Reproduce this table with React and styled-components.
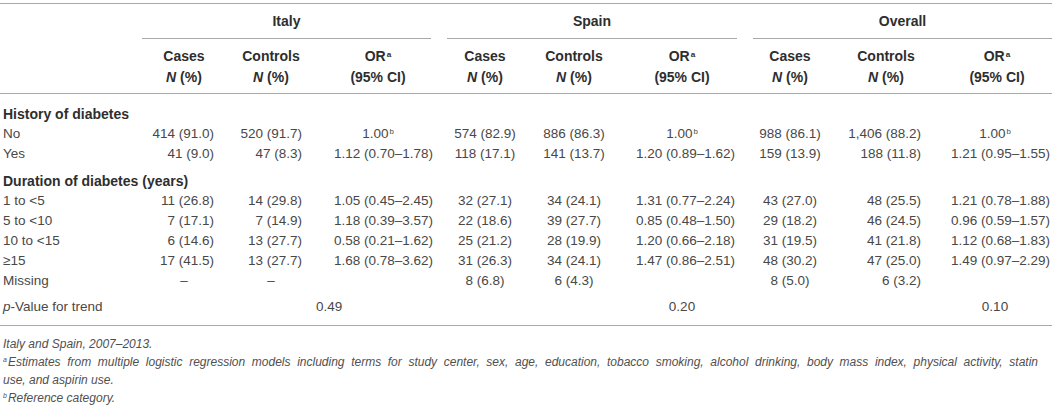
import React from 'react'
import styled, { createGlobalStyle } from 'styled-components'

const COLUMNS = '142px 84px 90px 124px 90px 88px 128px 88px 104px 114px'

// how each of the nine number columns lines its values up
const colAlign = [
    { align: 'right', pad: 12 },
    { align: 'right', pad: 14 },
    { align: 'right', pad: 7 },
    { align: 'center', pad: 0 },
    { align: 'center', pad: 0 },
    { align: 'right', pad: 11 },
    { align: 'center', pad: 0 },
    { align: 'right', pad: 17 },
    { align: 'right', pad: 2 },
]

const REF = 'REF'

const sections = [
    {
        title: 'History of diabetes',
        gap: 10,
        rows: [
            ['No', ['414 (91.0)', '520 (91.7)', REF, '574 (82.9)', '886 (86.3)', REF, '988 (86.1)', '1,406 (88.2)', REF]],
            ['Yes', ['41 (9.0)', '47 (8.3)', '1.12 (0.70–1.78)', '118 (17.1)', '141 (13.7)', '1.20 (0.89–1.62)', '159 (13.9)', '188 (11.8)', '1.21 (0.95–1.55)']],
        ],
    },
    {
        title: 'Duration of diabetes (years)',
        gap: 7,
        rows: [
            ['1 to <5', ['11 (26.8)', '14 (29.8)', '1.05 (0.45–2.45)', '32 (27.1)', '34 (24.1)', '1.31 (0.77–2.24)', '43 (27.0)', '48 (25.5)', '1.21 (0.78–1.88)']],
            ['5 to <10', ['7 (17.1)', '7 (14.9)', '1.18 (0.39–3.57)', '22 (18.6)', '39 (27.7)', '0.85 (0.48–1.50)', '29 (18.2)', '46 (24.5)', '0.96 (0.59–1.57)']],
            ['10 to <15', ['6 (14.6)', '13 (27.7)', '0.58 (0.21–1.62)', '25 (21.2)', '28 (19.9)', '1.20 (0.66–2.18)', '31 (19.5)', '41 (21.8)', '1.12 (0.68–1.83)']],
            ['≥15', ['17 (41.5)', '13 (27.7)', '1.68 (0.78–3.62)', '31 (26.3)', '34 (24.1)', '1.47 (0.86–2.51)', '48 (30.2)', '47 (25.0)', '1.49 (0.97–2.29)']],
            ['Missing', ['–', '–', '', '8 (6.8)', '6 (4.3)', '', '8 (5.0)', '6 (3.2)', '']],
        ],
    },
]

const GlobalStyle = createGlobalStyle`
    body {
        margin: 0;
        background: #fff;
        font-family: "Liberation Sans", Arial, sans-serif;
        color: #484848;
    }
`

const Page = styled.div`
    width: 1052px;
    padding-top: 3px;
`

const Table = styled.div`
    display: flex;
    flex-direction: column;
    border-top: 1px solid #a9a9a9;
    border-bottom: 1px solid #a9a9a9;
    padding-bottom: 8px;
`

const Row = styled.div`
    display: grid;
    grid-template-columns: ${COLUMNS};
    padding-top: ${p => p.$gap || 0}px;
    font-size: 13.5px;
    line-height: 20px;
`

const GroupHead = styled.div`
    grid-column: span 3;
    margin: 0 ${p => p.$last ? 0 : 9}px 0 ${p => p.$first ? 0 : 7}px;
    padding: 7px 0 7px;
    border-bottom: 1px solid #a9a9a9;
    text-align: center;
    font-size: 14px;
    font-weight: bold;
    color: #2e2e2e;
`

const HeadRow = styled.div`
    display: grid;
    grid-template-columns: ${COLUMNS};
    border-bottom: 1px solid #a9a9a9;
    padding: 7px 0 5px;
`

const ColHead = styled.div`
    text-align: center;
    font-size: 14px;
    line-height: 21px;
    font-weight: bold;
    color: #2e2e2e;
    padding-left: ${p => p.$shift || 0}px;

    em {
        font-style: italic;
    }
`

const SectionTitle = styled.div`
    grid-column: 1 / -1;
    padding-left: 3px;
    font-size: 14px;
    font-weight: bold;
    color: #2e2e2e;
`

const Label = styled.div`
    padding-left: 3px;
    white-space: nowrap;

    i {
        font-style: italic;
    }
`

const Cell = styled.div`
    white-space: nowrap;
    text-align: ${p => p.$align};
    padding-right: ${p => p.$align === 'right' ? p.$pad : 0}px;
`

const Sup = styled.sup`
    font-size: 0.58em;
    line-height: 0;
    vertical-align: 0.55em;
    margin-left: 1px;
`

const Notes = styled.div`
    width: 1035px;
    padding: 9px 0 0 3px;
    font-size: 12px;
    line-height: 18px;
    font-style: italic;
    color: #505050;
`

const Note = styled.p`
    margin: 0;
`

// a typeset line of a note that is stretched to the full measure
const NoteLine = styled.span`
    display: block;
    white-space: nowrap;
    text-align: ${p => p.$full ? 'justify' : 'left'};
    text-align-last: ${p => p.$full ? 'justify' : 'auto'};
`

const NoteMark = styled.sup`
    font-size: 7px;
    line-height: 0;
    vertical-align: 4px;
    margin-right: 1px;
`

const groups = ['Italy', 'Spain', 'Overall']

const HeaderBlock = () => (
    <>
        <Row>
            <div />
            {groups.map((g, i) => (
                <GroupHead key={g} $first={i === 0} $last={i === groups.length - 1}>{g}</GroupHead>
            ))}
        </Row>
        <HeadRow>
            <div />
            {groups.map(g => (
                <React.Fragment key={g}>
                    <ColHead>Cases<br /><em>N</em> (%)</ColHead>
                    <ColHead>Controls<br /><em>N</em> (%)</ColHead>
                    <ColHead $shift={g === 'Overall' ? 4 : 0}>OR<Sup>a</Sup><br />(95% CI)</ColHead>
                </React.Fragment>
            ))}
        </HeadRow>
    </>
)

const DataRow = ({ label, values }) => (
    <Row>
        <Label>{label}</Label>
        {values.map((v, i) => {
            if (v === REF) {
                return <Cell key={i} $align="center">1.00<Sup>b</Sup></Cell>
            }
            const a = v === '–' ? { align: 'center', pad: 0 } : colAlign[i]
            return <Cell key={i} $align={a.align} $pad={a.pad}>{v}</Cell>
        })}
    </Row>
)

const App = () => {
    return (
        <Page>
            <GlobalStyle />
            <Table>
                <HeaderBlock />
                {sections.map(s => (
                    <React.Fragment key={s.title}>
                        <Row $gap={s.gap}>
                            <SectionTitle>{s.title}</SectionTitle>
                        </Row>
                        {s.rows.map(([label, values]) => (
                            <DataRow key={label} label={label} values={values} />
                        ))}
                    </React.Fragment>
                ))}
                <Row $gap={6}>
                    <Label><i>p</i>-Value for trend</Label>
                    <div />
                    <div />
                    <Cell $align="left">0.49</Cell>
                    <div />
                    <div />
                    <Cell $align="center">0.20</Cell>
                    <div />
                    <div />
                    <Cell $align="center">0.10</Cell>
                </Row>
            </Table>
            <Notes>
                <Note>Italy and Spain, 2007–2013.</Note>
                <Note>
                    <NoteLine $full><NoteMark>a</NoteMark>Estimates from multiple logistic regression models including terms for study center, sex, age, education, tobacco smoking, alcohol drinking, body mass index, physical activity, statin</NoteLine>
                    <NoteLine>use, and aspirin use.</NoteLine>
                </Note>
                <Note><NoteMark>b</NoteMark>Reference category.</Note>
            </Notes>
        </Page>
    )
}

export default App
